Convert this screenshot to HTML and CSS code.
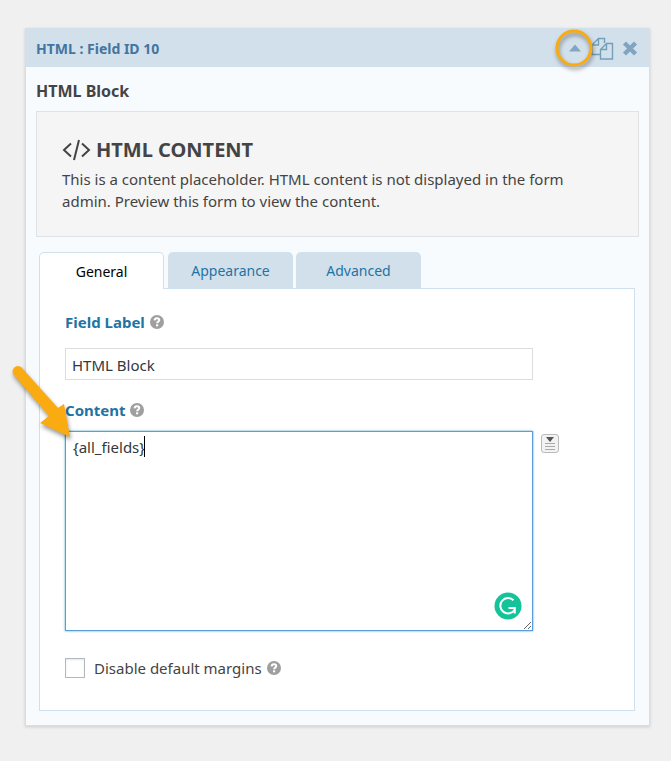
FILE: index.html
```html
<!DOCTYPE html>
<html lang="en">
<head>
    <meta charset="UTF-8">
    <meta name="viewport" content="width=device-width, initial-scale=1.0">
    <title>HTML Field Settings</title>
    <link rel="stylesheet" href="styles.css">
</head>
<body>
    <!-- Shared help icon -->
    <svg class="sprite" aria-hidden="true">
        <symbol id="icon-help" viewBox="0 0 14 14">
            <circle cx="7" cy="7" r="7" fill="#9f9f9f"/>
            <path d="M4.600 5.400C4.700 3.900 5.700 3.200 7 3.200c1.300 0 2.300.8 2.300 1.900 0 1.500-2.200 1.600-2.200 3.200" fill="none" stroke="#fff" stroke-width="2"/>
            <rect x="6" y="9.300" width="2.200" height="2" fill="#fff"/>
        </symbol>
    </svg>

    <div class="field">
        <div class="field-header">
            <span class="field-type">HTML : Field ID 10</span>
            <div class="field-actions">
                <button type="button" class="toggle-btn" aria-label="Collapse field">
                    <svg width="14" height="8" viewBox="0 0 14 8"><path d="M7 .5 13 7.500H1z" fill="#82a6c2"/></svg>
                    <svg class="highlight-ring" width="46" height="46" viewBox="0 0 46 46"><circle cx="23" cy="23" r="17" fill="none" stroke="#f9ab11" stroke-width="3"/></svg>
                </button>
                <button type="button" aria-label="Duplicate field">
                    <svg width="23" height="23" viewBox="0 0 23 23" fill="none" stroke="#72a0b8" stroke-width="1.400">
                        <path d="M9 17.500H1V8L7.500 1.500H13.500V6M7.500 1.500V8H1"/>
                        <path d="M9.500 22V12.500L15.500 6.500H21.500V22zM15.500 6.500V12.500H9.500"/>
                    </svg>
                </button>
                <button type="button" class="delete-btn" aria-label="Delete field">
                    <svg width="16" height="16" viewBox="0 0 16 16"><path d="M2.500 3 13.500 14M13.500 3 2.500 14" fill="none" stroke="#81a4c0" stroke-width="4.400"/></svg>
                </button>
            </div>
        </div>

        <div class="field-body">
            <h2 class="field-title">HTML Block</h2>

            <div class="placeholder">
                <h3>
                    <svg width="29" height="22" viewBox="0 0 29 22" fill="none" stroke="#444" stroke-width="2"><path d="M9 4.500 2 11 9 17.500M20 4.500 27 11 20 17.500M17 1 12 21"/></svg>
                    HTML CONTENT
                </h3>
                <p>This is a content placeholder. HTML content is not displayed in the form admin. Preview this form to view the content.</p>
            </div>

            <div class="settings">
                <div class="tabs" role="tablist">
                    <button type="button" class="tab active" role="tab" aria-selected="true">General</button>
                    <button type="button" class="tab" role="tab" aria-selected="false">Appearance</button>
                    <button type="button" class="tab" role="tab" aria-selected="false">Advanced</button>
                </div>

                <div class="panel" role="tabpanel">
                    <div class="setting">
                        <div class="label-row">
                            <label for="field-label">Field Label</label>
                            <svg class="help"><use href="#icon-help"/></svg>
                        </div>
                        <input type="text" id="field-label" value="HTML Block">
                    </div>

                    <div class="setting">
                        <div class="label-row">
                            <label for="field-content">Content</label>
                            <svg class="help"><use href="#icon-help"/></svg>
                        </div>
                        <div class="content-row">
                            <div class="editor">
                                <textarea id="field-content" spellcheck="false">{all_fields}</textarea>
                                <span class="caret"></span>
                                <svg class="grammar" width="28" height="28" viewBox="0 0 28 28">
                                    <circle cx="14" cy="14" r="13.500" fill="#15c39a"/>
                                    <path d="M19.500 8.300A7.700 7.700 0 1 0 20.500 18M14.500 16H20.800V21.500" fill="none" stroke="#fff" stroke-width="2"/>
                                </svg>
                                <svg class="pointer-arrow" width="72" height="84" viewBox="0 0 72 84">
                                    <path d="M9.500 14.500A5.400 5.400 0 0 1 18.500 8.500L54 48 60 44 66 77 36 63 45 56z" fill="#f9ab11"/>
                                </svg>
                            </div>
                            <button type="button" class="merge-btn" aria-label="Insert merge tag">
                                <svg width="12" height="14" viewBox="0 0 12 14"><path d="M2 0H10L6 5z" fill="#555"/><path d="M1 6.500H11M1 9.500H11M1 12.500H11" stroke="#aaa"/></svg>
                            </button>
                        </div>
                    </div>

                    <div class="check-row">
                        <input type="checkbox" id="disable-margins">
                        <label for="disable-margins">Disable default margins</label>
                        <svg class="help"><use href="#icon-help"/></svg>
                    </div>
                </div>
            </div>
        </div>
    </div>
</body>
</html>
```

FILE: styles.css
```css
* {
    box-sizing: border-box;
}
body {
    margin: 0;
    padding: 28px 21px 28px 25px;
    background-color: #f0f0f0;
    font-family: "Noto Sans", "Open Sans", sans-serif;
    font-size: 14px;
    color: #444;
}
h2, h3, p {
    margin: 0;
}
button {
    padding: 0;
    border: none;
    background: none;
    font-family: inherit;
    cursor: pointer;
}
svg {
    display: block;
    flex: none;
}
.sprite {
    position: absolute;
    width: 0;
    height: 0;
}
.field {
    border: 1px solid #d2e0eb;
    background-color: #f7fbfe;
    box-shadow: 0 1px 3px rgba(0, 0, 0, 0.15);
}
.field-header {
    display: flex;
    align-items: center;
    justify-content: space-between;
    height: 38px;
    padding: 0 11px 0 10px;
    background-color: #d2e0eb;
}
.field-type {
    font-size: 14px;
    font-weight: bold;
    color: #43759f;
}
.field-actions {
    display: flex;
    align-items: center;
}
.toggle-btn {
    position: relative;
    margin-right: 9px;
}
.highlight-ring {
    position: absolute;
    top: -19px;
    left: -17px;
    filter: drop-shadow(1px 3px 2px rgba(0, 0, 0, 0.4));
}
.delete-btn {
    margin-left: 8px;
}
.field-body {
    padding: 12px 10px 14px;
}
.field-title {
    font-size: 16px;
    line-height: 24px;
}
.placeholder {
    margin-top: 8px;
    padding: 24px 25px;
    border: 1px solid #dfe3e5;
    background-color: #f5f5f5;
}
.placeholder h3 {
    display: flex;
    align-items: center;
    gap: 5px;
    font-size: 20px;
    line-height: 28px;
}
.placeholder p {
    margin-top: 4px;
    font-size: 15px;
    line-height: 22px;
}
.settings {
    margin: 15px 4px 0 3px;
}
.tabs {
    display: flex;
    gap: 3px;
}
.tab {
    width: 125px;
    height: 36px;
    border-radius: 5px 5px 0 0;
    background-color: #d2e0eb;
    color: #1e74a3;
    font-size: 14px;
}
.tab.active {
    position: relative;
    z-index: 1;
    height: 37px;
    margin-right: 1px;
    margin-bottom: -1px;
    border: 1px solid #cfe1ef;
    border-bottom: none;
    background-color: #fff;
    color: #000;
}
.panel {
    padding: 21px 25px 30px;
    border: 1px solid #cfe1ef;
    background-color: #fff;
}
.setting {
    margin-bottom: 18px;
}
.label-row {
    display: flex;
    align-items: center;
    gap: 5px;
    height: 24px;
    font-size: 15px;
    font-weight: bold;
    color: #1e74a3;
}
.help {
    width: 14px;
    height: 14px;
}
input[type="text"],
textarea {
    display: block;
    font-family: inherit;
    font-size: 15px;
    color: #32373c;
    outline: none;
}
input[type="text"] {
    width: 86%;
    height: 32px;
    margin-top: 14px;
    padding: 3px 6px 2px;
    border: 1px solid #ddd;
}
.content-row {
    display: flex;
    align-items: flex-start;
    gap: 8px;
    margin-top: 9px;
}
.editor {
    position: relative;
    width: 86%;
}
textarea {
    width: 100%;
    height: 200px;
    padding: 4px 7px;
    border: 1px solid #5b9dd9;
    box-shadow: 0 0 2px rgba(30, 140, 190, 0.8);
    line-height: 22px;
    resize: vertical;
}
.caret {
    position: absolute;
    top: 5px;
    left: 79px;
    width: 1px;
    height: 21px;
    background-color: #000;
}
.grammar {
    position: absolute;
    right: 11px;
    bottom: 11px;
}
.pointer-arrow {
    position: absolute;
    top: -71px;
    left: -61px;
    filter: drop-shadow(1px 3px 2px rgba(0, 0, 0, 0.4));
}
.merge-btn {
    display: flex;
    justify-content: center;
    align-items: center;
    width: 18px;
    height: 19px;
    margin-top: 3px;
    border: 1px solid #bbb;
    border-radius: 3px;
    background-color: #f2f2f2;
}
.check-row {
    display: flex;
    align-items: center;
    gap: 5px;
    margin-top: 25px;
    font-size: 15px;
    line-height: 24px;
}
.check-row input {
    appearance: none;
    width: 20px;
    height: 20px;
    margin: 0 4px 0 0;
    border: 1px solid #b4b9be;
    background-color: #fff;
    box-shadow: inset 0 1px 2px rgba(0, 0, 0, 0.1);
}
```
